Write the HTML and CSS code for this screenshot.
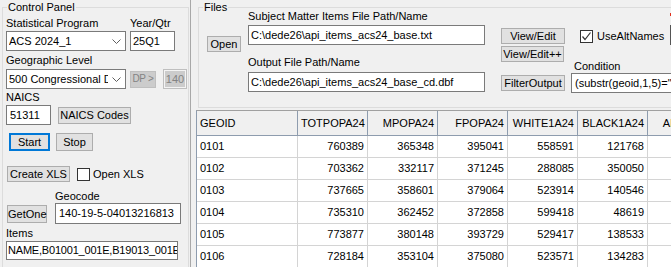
FILE: index.html
```html
<!DOCTYPE html>
<html lang="en">
<head>
    <meta charset="UTF-8">
    <title>API Items Extract</title>
    <link rel="stylesheet" href="styles.css">
</head>
<body>

<div class="app">
    <div class="left">
        <div class="group control-panel">
            <span class="caption">Control Panel</span>

            <div class="row r-lbl1">
                <span class="lbl prog-lbl">Statistical Program</span>
                <span class="lbl">Year/Qtr</span>
            </div>
            <div class="row r-ctl1">
                <div class="combo">
                    <span class="combo-text">ACS 2024_1</span>
                    <svg class="chev" width="9" height="5" viewBox="0 0 9 5"><polyline points="0.5,0.5 4.5,4.5 8.5,0.5" fill="none" stroke="#5f5f5f" stroke-width="1"/></svg>
                </div>
                <div class="input year">25Q1</div>
            </div>

            <div class="row r-lbl2"><span class="lbl">Geographic Level</span></div>
            <div class="row r-ctl2">
                <div class="combo">
                    <span class="combo-text">500 Congressional District</span>
                    <svg class="chev" width="9" height="5" viewBox="0 0 9 5"><polyline points="0.5,0.5 4.5,4.5 8.5,0.5" fill="none" stroke="#5f5f5f" stroke-width="1"/></svg>
                </div>
                <button class="btn disabled dp">DP &gt;</button>
                <button class="btn disabled sumlev">140</button>
            </div>

            <div class="row r-lbl3"><span class="lbl">NAICS</span></div>
            <div class="row r-ctl3">
                <div class="input naics">51311</div>
                <button class="btn naics-btn">NAICS Codes</button>
            </div>

            <div class="row r-run">
                <button class="btn start">Start</button>
                <button class="btn stop">Stop</button>
            </div>

            <div class="row r-xls">
                <button class="btn xls">Create XLS</button>
                <span class="check"></span>
                <span class="lbl">Open XLS</span>
            </div>

            <div class="row r-geo">
                <button class="btn getone">GetOne</button>
                <div class="geo-col">
                    <span class="lbl">Geocode</span>
                    <div class="input geocode">140-19-5-04013216813</div>
                </div>
            </div>

            <div class="row r-lbl4"><span class="lbl">Items</span></div>
            <div class="input items">NAME,B01001_001E,B19013_001E,B19301_001E</div>
        </div>
    </div>

    <div class="splitter"></div>

    <div class="right">
        <div class="top">
            <div class="group files">
                <span class="caption">Files</span>

                <button class="btn open">Open</button>

                <div class="paths">
                    <span class="lbl path-lbl1">Subject Matter Items File Path/Name</span>
                    <div class="input path in1">C:\dede26\api_items_acs24_base.txt</div>
                    <span class="lbl path-lbl2">Output File Path/Name</span>
                    <div class="input path in2">C:\dede26\api_items_acs24_base_cd.dbf</div>
                </div>

                <div class="actions">
                    <button class="btn act view">View/Edit</button>
                    <button class="btn act viewpp">View/Edit++</button>
                    <button class="btn act filter">FilterOutput</button>
                </div>

                <div class="options">
                    <div class="alt-row">
                        <span class="check checked">
                            <svg width="11" height="11" viewBox="0 0 11 11"><polyline points="1.5,5.5 4,8.5 9.5,1.5" fill="none" stroke="#333" stroke-width="1.2"/></svg>
                        </span>
                        <span class="lbl">UseAltNames</span>
                    </div>
                    <span class="lbl cond-lbl">Condition</span>
                    <div class="input cond">(substr(geoid,1,5)="04013")</div>
                </div>

                <div class="edge">
                    <span class="req"></span>
                    <div class="edge-box"></div>
                </div>
            </div>
        </div>

        <div class="grid">
            <div class="hd left-al">GEOID</div>
            <div class="hd">TOTPOPA24</div>
            <div class="hd">MPOPA24</div>
            <div class="hd">FPOPA24</div>
            <div class="hd">WHITE1A24</div>
            <div class="hd">BLACK1A24</div>
            <div class="hd">AIAN1A24</div>

            <div class="cell left-al">0101</div><div class="cell">760389</div><div class="cell">365348</div><div class="cell">395041</div><div class="cell">558591</div><div class="cell">121768</div><div class="cell">4592</div>
            <div class="cell left-al">0102</div><div class="cell">703362</div><div class="cell">332117</div><div class="cell">371245</div><div class="cell">288085</div><div class="cell">350050</div><div class="cell">3417</div>
            <div class="cell left-al">0103</div><div class="cell">737665</div><div class="cell">358601</div><div class="cell">379064</div><div class="cell">523914</div><div class="cell">140546</div><div class="cell">3166</div>
            <div class="cell left-al">0104</div><div class="cell">735310</div><div class="cell">362452</div><div class="cell">372858</div><div class="cell">599418</div><div class="cell">48619</div><div class="cell">2718</div>
            <div class="cell left-al">0105</div><div class="cell">773877</div><div class="cell">380148</div><div class="cell">393729</div><div class="cell">529417</div><div class="cell">138533</div><div class="cell">3904</div>
            <div class="cell left-al">0106</div><div class="cell">728184</div><div class="cell">353104</div><div class="cell">375080</div><div class="cell">523571</div><div class="cell">134283</div><div class="cell">3851</div>
        </div>
    </div>
</div>

</body>
</html>
```

FILE: styles.css
```css
* {
    box-sizing: border-box;
}

body {
    margin: 0;
    width: 671px;
    height: 267px;
    overflow: hidden;
    background-color: #f0f0f0;
    font-family: "Liberation Sans", Arial, sans-serif;
    font-size: 11px;
    color: #000;
}

.app {
    display: flex;
    height: 267px;
}

/* group boxes */
.group {
    position: relative;
    border: 1px solid #dcdcdc;
}

.caption {
    position: absolute;
    top: -8px;
    left: 4px;
    padding: 0 1px;
    line-height: 14px;
    background-color: #f0f0f0;
}

.lbl {
    line-height: 13px;
    white-space: nowrap;
}

.row {
    display: flex;
    align-items: center;
}

.input {
    height: 20px;
    background-color: #fff;
    border: 1px solid #7a7a7a;
    padding-left: 2px;
    line-height: 18px;
    white-space: nowrap;
    overflow: hidden;
}

.btn {
    font-family: inherit;
    font-size: 11px;
    color: #000;
    background-color: #e1e1e1;
    border: 1px solid #adadad;
    padding: 0;
    margin: 0;
    line-height: 14px;
    white-space: nowrap;
}

.btn.disabled {
    background-color: #cccccc;
    border-color: #bfbfbf;
    color: #838383;
}

.check {
    display: inline-flex;
    align-items: center;
    justify-content: center;
    width: 13px;
    height: 13px;
    background-color: #fff;
    border: 1px solid #333;
}

/* left panel */
.left {
    width: 190px;
    flex-shrink: 0;
    padding: 7px 1px 0 2px;
}

.control-panel {
    height: 280px;
    padding-left: 3px;
}

.r-lbl1 { margin-top: 9px; }
.prog-lbl { width: 124px; }

.r-ctl1 { margin-top: 1px; gap: 4px; }

.combo {
    display: flex;
    align-items: center;
    justify-content: space-between;
    width: 120px;
    height: 20px;
    background-color: #fff;
    border: 1px solid #7a7a7a;
    padding: 0 4px 0 2px;
}

.combo-text {
    width: 99px;
    overflow: hidden;
    white-space: nowrap;
}

.year { width: 45px; }

.r-lbl2 { margin-top: 3px; }
.r-ctl2 { margin-top: 2px; }

.dp {
    width: 26px;
    height: 17px;
    margin-left: 4px;
    font-size: 10px;
    letter-spacing: -0.3px;
}

.sumlev {
    width: 24px;
    height: 20px;
    margin-left: 7px;
    color: #6e6e6e;
    box-shadow: inset 0 0 0 1px #f4f4f4;
}

.r-lbl3 { margin-top: 2px; }
.r-ctl3 { margin-top: 1px; }

.naics { width: 45px; padding-left: 3px; }

.naics-btn {
    width: 73px;
    height: 17px;
    margin-left: 7px;
}

.r-run { margin-top: 8px; padding-left: 3px; gap: 6px; }

.start {
    width: 41px;
    height: 18px;
    border: 2px solid #0078d7;
}

.stop {
    width: 37px;
    height: 18px;
}

.r-xls { margin-top: 15px; padding-left: 1px; }

.xls {
    width: 63px;
    height: 16px;
    margin-right: 7px;
}

.r-xls .check { margin-right: 3px; }

.r-geo {
    margin-top: 8px;
    padding-left: 1px;
    align-items: flex-end;
}

.getone {
    width: 40px;
    height: 18px;
    margin-bottom: 1px;
}

.geo-col {
    display: flex;
    flex-direction: column;
    margin-left: 8px;
}

.geocode {
    width: 126px;
    height: 21px;
    padding-left: 3px;
}

.r-lbl4 { margin-top: 3px; }

.items {
    width: 172px;
    height: 19px;
    margin-top: 1px;
    padding-left: 1px;
    line-height: 17px;
    letter-spacing: -0.2px;
}

/* splitter */
.splitter {
    width: 6px;
    flex-shrink: 0;
    border-left: 1px solid #a8a8a8;
}

/* right panel */
.right {
    flex: 1;
    display: flex;
    flex-direction: column;
    min-width: 0;
}

.top {
    height: 110px;
    flex-shrink: 0;
    padding: 7px 0 0 2px;
}

.files {
    display: flex;
    align-items: flex-start;
    width: 520px;
    height: 101px;
}

.open {
    width: 34px;
    height: 16px;
    margin: 28px 0 0 8px;
}

.paths {
    display: flex;
    flex-direction: column;
    width: 237px;
    margin-left: 7px;
}

.path-lbl1 { margin-top: 2px; }
.in1 { margin-top: 2px; }
.path-lbl2 { margin-top: 11px; }
.in2 { margin-top: 3px; }

.actions {
    display: flex;
    flex-direction: column;
    width: 64px;
    margin-left: 16px;
}

.act { height: 16px; }
.view { margin-top: 20px; }
.viewpp { margin-top: 2px; width: 63px; }
.filter { margin-top: 13px; }

.options {
    display: flex;
    flex-direction: column;
    width: 99px;
    margin-left: 6px;
}

.alt-row {
    display: flex;
    align-items: center;
    height: 16px;
    margin-top: 20px;
    padding-left: 9px;
    gap: 4px;
}

.cond-lbl {
    margin-top: 16px;
    padding-left: 3px;
}

.cond {
    width: 130px;
    padding-left: 3px;
}

.edge {
    display: flex;
    flex-direction: column;
}

.req {
    width: 2px;
    height: 3px;
    margin-top: 5px;
    background-color: #e0301e;
}

.edge-box {
    width: 10px;
    height: 20px;
    margin-top: 9px;
    border-left: 1px solid #555;
}

/* data grid */
.grid {
    flex: 1;
    display: grid;
    grid-template-columns: 101px repeat(6, 70px);
    grid-auto-rows: 22px;
    grid-template-rows: 25px;
    align-content: start;
    background-color: #fff;
    border-top: 1px solid #a0a0a0;
    border-left: 1px solid #8e9cae;
}

.hd,
.cell {
    padding: 0 3px;
    text-align: right;
    white-space: nowrap;
    overflow: hidden;
}

.hd {
    line-height: 24px;
    background-color: #f0f0f0;
    border-right: 1px solid #8e9cae;
    border-bottom: 1px solid #8e9cae;
}

.cell {
    line-height: 21px;
    border-right: 1px solid #d4d4d4;
    border-bottom: 1px solid #d4d4d4;
}

.left-al {
    text-align: left;
}
```
